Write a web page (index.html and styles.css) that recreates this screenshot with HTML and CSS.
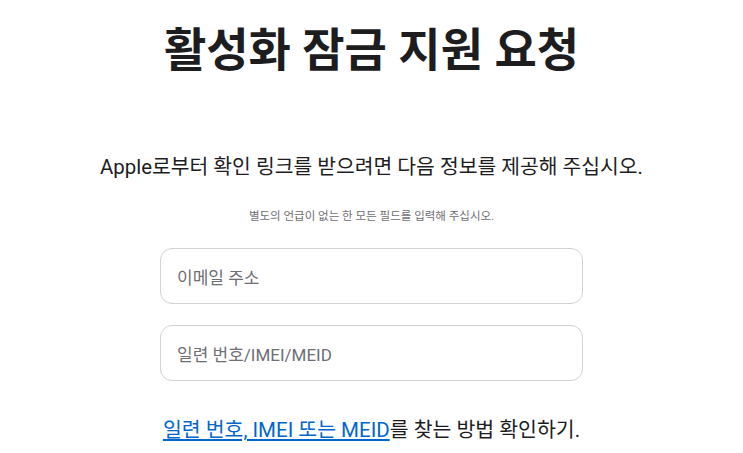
FILE: index.html
```html
<!DOCTYPE html>
<html lang="ko">
<head>
<meta charset="utf-8">
<link rel="stylesheet" href="styles.css">
</head>
<body>
<main class="page">
  <h1 class="title">활성화 잠금 지원 요청</h1>
  <p class="lead">Apple로부터 확인 링크를 받으려면 다음 정보를 제공해 주십시오.</p>
  <p class="note">별도의 언급이 없는 한 모든 필드를 입력해 주십시오.</p>
  <form class="form">
    <div class="field"><span class="placeholder">이메일 주소</span></div>
    <div class="field"><span class="placeholder">일련 번호/IMEI/MEID</span></div>
  </form>
  <p class="help"><a class="link" href="#">일련 번호, IMEI 또는 MEID</a>를 찾는 방법 확인하기.</p>
</main>
</body>
</html>
```
FILE: styles.css
```css
html, body {
  margin: 0;
  padding: 0;
  background: #ffffff;
}
body {
  font-family: "Roboto", "Noto Sans CJK KR", sans-serif;
  color: #1d1d1f;
}
.page {
  display: flex;
  flex-direction: column;
  align-items: center;
  width: 743px;
}
.title {
  margin: 20px 0 0;
  font-size: 46px;
  line-height: 60px;
  font-weight: 700;
  letter-spacing: 0;
}
.lead {
  margin: 72px 0 0;
  font-size: 20.4px;
  line-height: 30px;
  font-weight: 400;
}
.note {
  margin: 26px 0 0;
  font-size: 11.5px;
  line-height: 16px;
  color: #6e6e73;
}
.form {
  display: flex;
  flex-direction: column;
  gap: 21px;
  margin-top: 24px;
}
.field {
  box-sizing: border-box;
  width: 423px;
  height: 56px;
  border: 1px solid #d2d2d7;
  border-radius: 12px;
  display: flex;
  align-items: center;
  padding: 0 16px;
}
.placeholder {
  font-size: 17px;
  color: #6e6e73;
}
.help {
  margin: 35px 0 0;
  font-size: 20.5px;
  line-height: 28px;
}
.link {
  color: #0066cc;
  text-decoration: underline;
}
```
